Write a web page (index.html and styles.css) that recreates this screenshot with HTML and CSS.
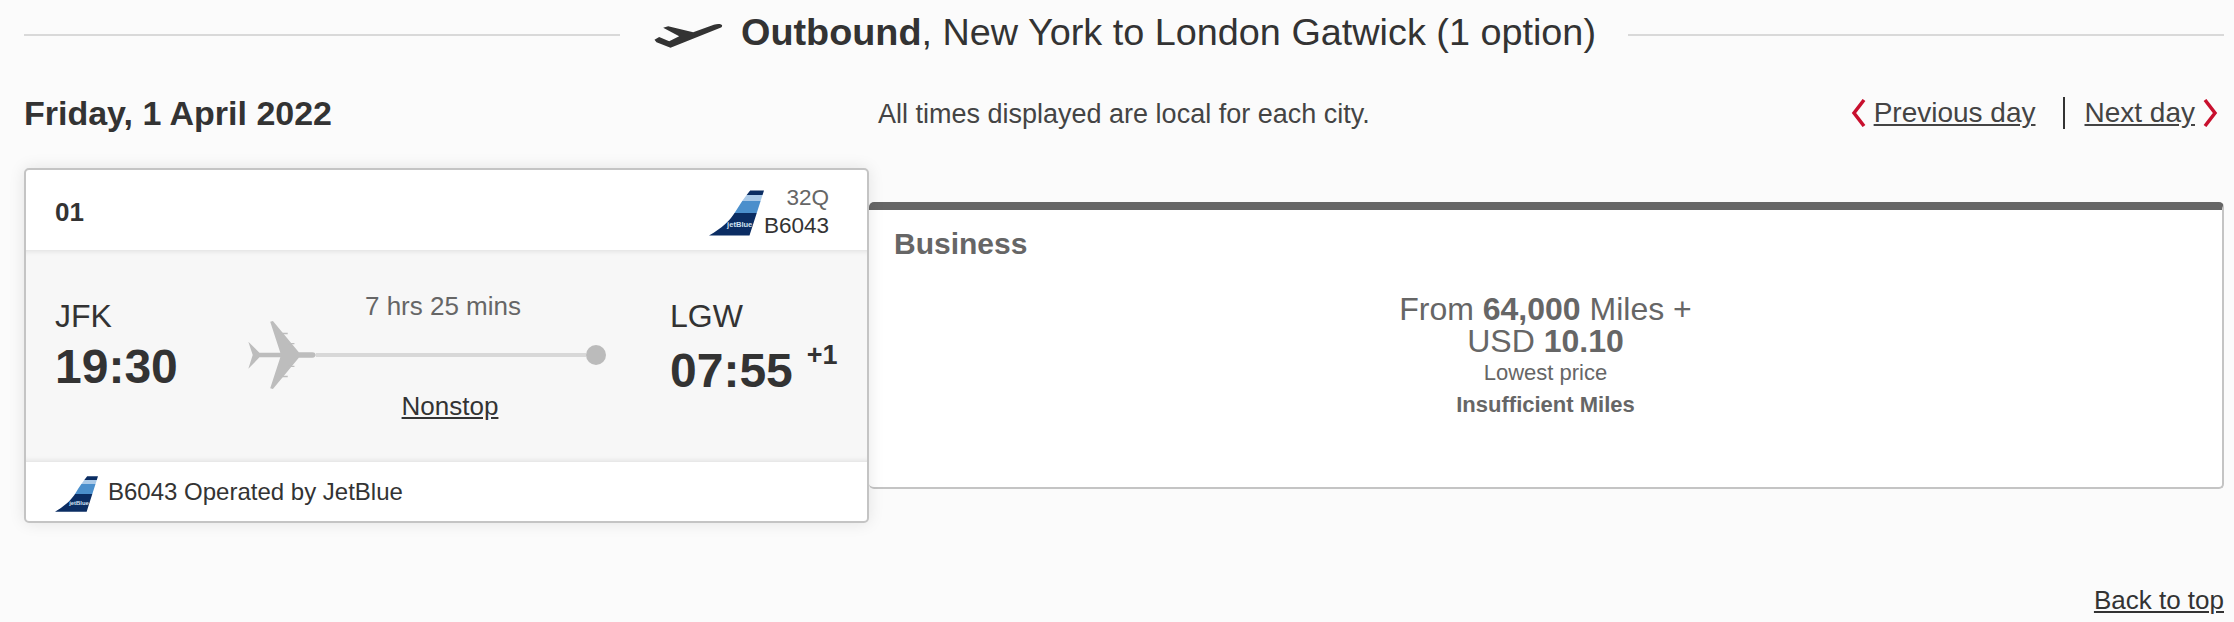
FILE: index.html
```html
<!DOCTYPE html>
<html lang="en">
<head>
  <meta charset="UTF-8">
  <title>Outbound flights</title>
  <link rel="stylesheet" href="styles.css">
</head>
<body>

  <svg class="defs" width="0" height="0">
    <defs>
      <linearGradient id="tail-bands" x1="0" y1="0" x2="0" y2="1">
        <stop offset="0.09" stop-color="#0b2d63"></stop>
        <stop offset="0.09" stop-color="#a9c9e8"></stop>
        <stop offset="0.23" stop-color="#a9c9e8"></stop>
        <stop offset="0.23" stop-color="#4b8fcc"></stop>
        <stop offset="0.51" stop-color="#4b8fcc"></stop>
        <stop offset="0.51" stop-color="#0b2d63"></stop>
      </linearGradient>
      <symbol id="tail" viewBox="85 60 167 137">
        <path d="M210 60H252L208 197H85C125 175 150 150 165 125C180 100 195 78 210 60Z" fill="url(#tail-bands)"></path>
        <text x="140" y="171" class="tail-text">jetBlue</text>
      </symbol>
    </defs>
  </svg>

  <section class="title-row">
    <div class="rule"></div>
    <svg class="takeoff" viewBox="44 30 204 75">
      <path d="M247 38C247 33 235 31 222 35L160 58L85 40L70 44L118 70L88 85L58 72L44 80L50 88L92 104L238 46C244 44 247 41 247 38Z"></path>
    </svg>
    <h1><b>Outbound</b>, New York to London Gatwick (1 option)</h1>
    <div class="rule"></div>
  </section>

  <section class="date-row">
    <h2>Friday, 1 April 2022</h2>
    <p class="note">All times displayed are local for each city.</p>
    <nav class="day-nav">
      <svg class="chevron" viewBox="0 0 16 28"><path d="M13 1L3 14L13 27"></path></svg>
      <a href="#">Previous day</a>
      <span class="divider"></span>
      <a href="#">Next day</a>
      <svg class="chevron" viewBox="0 0 16 28"><path d="M3 1L13 14L3 27"></path></svg>
    </nav>
  </section>

  <section class="results">
    <div class="flight-card">
      <div class="card-head">
        <span class="option-no">01</span>
        <div class="carrier">
          <svg class="tail-lg"><use href="#tail"></use></svg>
          <div class="flight-no">
            <span class="aircraft">32Q</span>
            <span>B6043</span>
          </div>
        </div>
      </div>

      <div class="card-body">
        <div class="stop">
          <div class="code">JFK</div>
          <div class="time">19:30</div>
        </div>
        <div class="route">
          <div class="duration">7 hrs 25 mins</div>
          <div class="track">
            <svg class="plane" viewBox="55 120 200 202">
              <path d="M100 214L88 214L55 182L68 221L55 262L88 228L100 228L150 228L120 320L128 322L205 229L245 229C252 229 255 225 255 221C255 217 252 213 245 213L205 213L128 120L120 122L150 214Z"></path>
              <path d="M152 155H172V159H152ZM172 185H192V189H172ZM172 253H192V257H172ZM152 283H172V287H152Z"></path>
            </svg>
            <div class="line"></div>
            <div class="dot"></div>
          </div>
          <a class="stops" href="#">Nonstop</a>
        </div>
        <div class="stop stop-end">
          <div class="code">LGW</div>
          <div class="time">07:55<sup>+1</sup></div>
        </div>
      </div>

      <div class="card-foot">
        <svg class="tail-sm"><use href="#tail"></use></svg>
        <span>B6043 Operated by JetBlue</span>
      </div>
    </div>

    <div class="fare-panel">
      <h3>Business</h3>
      <div class="fare">
        <div class="price">From <b>64,000</b> Miles +<br>USD <b>10.10</b></div>
        <div class="lowest">Lowest price</div>
        <div class="status">Insufficient Miles</div>
      </div>
    </div>
  </section>

  <div class="back-top">
    <a href="#">Back to top</a>
  </div>

</body>
</html>
```

FILE: styles.css
```css
* {
  box-sizing: border-box;
}

html, body {
  height: 622px;
  overflow: hidden;
}

body {
  margin: 0;
  padding: 0 10px 0 24px;
  font-family: "Liberation Sans", Arial, sans-serif;
  background: #fbfbfb;
  color: #333;
}

a {
  color: #333;
}

.defs {
  position: absolute;
}

.tail-text {
  font-family: "Liberation Sans", Arial, sans-serif;
  font-size: 23px;
  font-weight: bold;
  fill: #cfe0f2;
}

/* title */
.title-row {
  display: flex;
  align-items: center;
  height: 70px;
}

.rule {
  flex: 1;
  height: 2px;
  background: #d9d9d9;
}

.takeoff {
  width: 69px;
  height: 25px;
  margin: 0 18px 0 34px;
  fill: #333;
}

.title-row h1 {
  margin: 0 32px 6px 0;
  font-size: 37.8px;
  line-height: 44px;
  font-weight: normal;
  white-space: nowrap;
}

/* date row */
.date-row {
  display: flex;
  align-items: center;
  height: 44px;
  margin-top: 21px;
}

.date-row h2 {
  margin: 0;
  width: 854px;
  font-size: 34px;
  font-weight: bold;
}

.note {
  margin: 0;
  padding-top: 3px;
  font-size: 27px;
  color: #444;
}

.day-nav {
  display: flex;
  align-items: center;
  margin-left: auto;
  margin-right: 6px;
  font-size: 28px;
}

.day-nav a {
  color: #444;
}

.chevron {
  width: 16px;
  height: 28px;
  fill: none;
  stroke: #c8102e;
  stroke-width: 3.5;
}

.day-nav a:first-of-type {
  margin-left: 7px;
}

.day-nav a:last-of-type {
  margin-right: 7px;
}

.divider {
  width: 2px;
  height: 32px;
  margin: 0 20px 0 27px;
  background: #333;
}

/* results */
.results {
  display: flex;
  align-items: flex-start;
  margin-top: 33px;
}

.flight-card {
  position: relative;
  z-index: 1;
  width: 845px;
  height: 355px;
  background: #fff;
  border: 2px solid #c4c4c4;
  border-radius: 5px;
  box-shadow: 0 0 16px rgba(0,0,0,0.1);
}

.card-head {
  display: flex;
  align-items: center;
  justify-content: space-between;
  height: 80px;
  padding: 0 38px 0 29px;
}

.option-no {
  padding-top: 4px;
  font-size: 26px;
  font-weight: bold;
}

.carrier {
  display: flex;
  align-items: flex-end;
  margin-top: 4px;
}

.tail-lg {
  width: 55px;
  height: 46px;
  margin-bottom: 4px;
}

.flight-no {
  display: flex;
  flex-direction: column;
  align-items: flex-end;
  font-size: 22.5px;
  line-height: 28px;
}

.aircraft {
  color: #666;
}

.card-body {
  display: flex;
  height: 212px;
  padding: 0 0 0 29px;
  background: #f7f7f7;
  box-shadow: inset 0 6px 6px -6px rgba(0,0,0,0.14), inset 0 -6px 6px -6px rgba(0,0,0,0.14);
}

.stop {
  width: 193px;
  padding-top: 49px;
}

.stop-end {
  width: auto;
  margin-left: 64px;
}

.code {
  font-size: 32px;
  line-height: 34px;
}

.time {
  margin-top: 7px;
  font-size: 48px;
  line-height: 54px;
  font-weight: bold;
}

.stop-end .time {
  margin-top: 11px;
}

.time sup {
  position: relative;
  top: -6px;
  margin-left: 14px;
  font-size: 27px;
  line-height: 0;
  vertical-align: super;
}

.route {
  display: flex;
  flex-direction: column;
  width: 358px;
  text-align: center;
}

.duration {
  margin-top: 40px;
  padding-left: 32px;
  font-size: 26px;
  line-height: 32px;
  color: #666;
}

.track {
  display: flex;
  align-items: center;
  height: 67px;
  margin-top: -1px;
}

.plane {
  flex: none;
  width: 68px;
  height: 68px;
  fill: #bdbdbd;
}

.line {
  flex: 1;
  height: 4px;
  background: #d8d8d8;
}

.dot {
  flex: none;
  width: 20px;
  height: 20px;
  border-radius: 50%;
  background: #bbb;
}

.stops {
  margin-top: 2px;
  padding-left: 46px;
  font-size: 26px;
  line-height: 32px;
}

.card-foot {
  display: flex;
  align-items: center;
  height: 59px;
  padding: 0 0 0 29px;
  font-size: 24px;
}

.tail-sm {
  width: 43px;
  height: 36px;
  margin: 4px 10px 0 0;
}

/* fare panel */
.fare-panel {
  flex: 1;
  height: 287px;
  margin-top: 34px;
  background: #fff;
  border: 2px solid #c4c4c4;
  border-top: 8px solid #666;
  border-radius: 5px;
  border-left: 0;
  color: #666;
}

.fare-panel h3 {
  margin: 0;
  padding: 16px 0 0 25px;
  font-size: 30px;
  line-height: 36px;
}

.fare {
  margin-top: 31px;
  text-align: center;
}

.price {
  font-size: 32px;
  line-height: 32px;
}

.lowest {
  margin-top: 2px;
  font-size: 22px;
  line-height: 28px;
}

.status {
  margin-top: 4px;
  font-size: 22px;
  line-height: 28px;
  font-weight: bold;
}

.back-top {
  margin-top: 62px;
  text-align: right;
  font-size: 26px;
}
```
